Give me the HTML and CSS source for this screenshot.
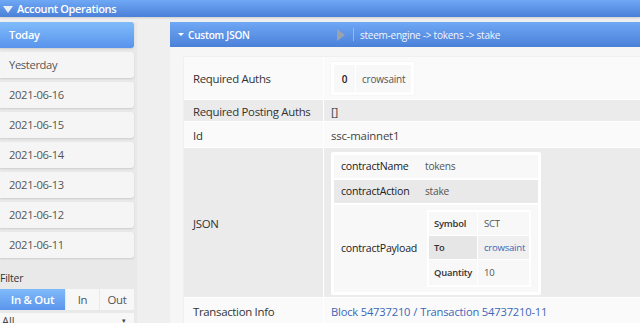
FILE: index.html
```html
<!DOCTYPE html>
<html>
<head>
<meta charset="utf-8">
<link rel="stylesheet" href="styles.css">
</head>
<body>
<div class="topbar"><span class="tri-down"></span><span class="topbar-title">Account Operations</span></div>
<div class="layout">
  <aside class="sidebar">
    <div class="day active">Today</div>
    <div class="day">Yesterday</div>
    <div class="day">2021-06-16</div>
    <div class="day">2021-06-15</div>
    <div class="day">2021-06-14</div>
    <div class="day">2021-06-13</div>
    <div class="day">2021-06-12</div>
    <div class="day">2021-06-11</div>
    <div class="filter">
      <div class="filter-label">Filter</div>
      <div class="seg">
        <div class="seg-btn active">In &amp; Out</div>
        <div class="seg-btn in">In</div>
        <div class="seg-btn out">Out</div>
      </div>
      <div class="select"><span>All</span><span class="caret">▾</span></div>
    </div>
  </aside>
  <main class="panel">
    <div class="panel-head">
      <div class="ph-left"><span class="tri-small"></span><span class="ph-title">Custom JSON</span></div>
      <div class="ph-right">
        <svg class="play" width="8" height="12" viewBox="0 0 8 12"><path d="M0 0 L8 6 L0 12 Z" fill="#9aa3ad"/></svg>
        <span class="sep"></span>
        <span class="ph-path">steem-engine -&gt; tokens -&gt; stake</span>
      </div>
    </div>
    <div class="panel-body">
      <div class="tbl">
        <div class="row r-auths">
          <div class="lab">Required Auths</div>
          <div class="val">
            <div class="authbox"><span class="ab-idx">0</span><span class="ab-name">crowsaint</span></div>
          </div>
        </div>
        <div class="row alt r-post">
          <div class="lab">Required Posting Auths</div>
          <div class="val">[]</div>
        </div>
        <div class="row r-id">
          <div class="lab">Id</div>
          <div class="val">ssc-mainnet1</div>
        </div>
        <div class="row alt r-json">
          <div class="lab">JSON</div>
          <div class="val">
            <div class="jt">
              <div class="jrow"><div class="jk">contractName</div><div class="jv">tokens</div></div>
              <div class="jrow jalt"><div class="jk">contractAction</div><div class="jv">stake</div></div>
              <div class="jrow jpay"><div class="jk">contractPayload</div>
                <div class="jv">
                  <div class="pt">
                    <div class="prow"><div class="pk">Symbol</div><div class="pv">SCT</div></div>
                    <div class="prow palt"><div class="pk">To</div><div class="pv"><a class="link">crowsaint</a></div></div>
                    <div class="prow"><div class="pk">Quantity</div><div class="pv">10</div></div>
                  </div>
                </div>
              </div>
            </div>
          </div>
        </div>
        <div class="row r-tx">
          <div class="lab">Transaction Info</div>
          <div class="val"><a class="link">Block 54737210</a> / <a class="link">Transaction 54737210-11</a></div>
        </div>
      </div>
    </div>
  </main>
</div>
</body>
</html>
```

FILE: styles.css
```css
* { box-sizing: border-box; }
html, body { margin: 0; padding: 0; }
body {
  width: 640px;
  height: 323px;
  overflow: hidden;
  background: #efefef;
  font-family: "Open Sans", "Noto Sans", sans-serif;
  color: #333;
}
.topbar {
  height: 17px;
  background: linear-gradient(#6fa8f5, #4b80d8);
  display: flex;
  align-items: center;
  padding-left: 3px;
  color: #fff;
  font-size: 11px;
  letter-spacing: -0.35px;
  font-weight: 600;
  box-shadow: 0 1px 2px rgba(0,0,0,0.15);
}
.tri-down {
  width: 0; height: 0;
  border-left: 5px solid transparent;
  border-right: 5px solid transparent;
  border-top: 7px solid #e8eef8;
  margin-right: 4px;
  margin-top: 1px;
}
.topbar-title { line-height: 17px; }
.layout {
  display: flex;
  padding-top: 5px;
}
.sidebar {
  width: 137px;
  flex: none;
  background: #e9e9e9;
  padding-right: 3px;
  display: flex;
  flex-direction: column;
  gap: 4px;
  height: 320px;
}
.day {
  height: 26px;
  background: #f5f5f5;
  border-radius: 0 3px 3px 0;
  box-shadow: 0 1px 2px rgba(0,0,0,0.12);
  font-size: 11.2px;
  letter-spacing: -0.35px;
  color: #555;
  padding-left: 9px;
  line-height: 26px;
}
.day.active {
  background: linear-gradient(#80bcfa, #5993ec);
  color: #fff;
  font-weight: 600;
  font-size: 11px;
  letter-spacing: -0.3px;
}
.filter {
  margin-top: 7px;
}
.filter-label {
  font-size: 10.4px;
  letter-spacing: -0.2px;
  color: #333;
  line-height: 14px;
  margin-bottom: 4px;
  padding-top: 2px;
}
.seg {
  display: flex;
  height: 21px;
  gap: 1px;
}
.seg-btn {
  background: #f7f7f7;
  font-size: 11.4px;
  letter-spacing: -0.3px;
  color: #555;
  display: flex;
  align-items: center;
  justify-content: center;
}
.seg-btn.active {
  width: 65px;
  background: linear-gradient(#7fbbfa, #5b95ec);
  color: #fff;
  font-weight: 600;
}
.seg-btn.in { width: 33px; }
.seg-btn.out { width: 34px; }
.select {
  margin-top: 3px;
  height: 16px;
  background: #f7f7f7;
  display: flex;
  justify-content: space-between;
  padding: 0 8px 0 2px;
  font-size: 11px;
  color: #444;
  line-height: 16px;
}
.caret { font-size: 7px; }
.panel {
  margin-left: 33px;
  flex: 1;
  min-width: 0;
  background: #f6f6f6;
  height: 320px;
}
.panel-head {
  height: 25px;
  background: linear-gradient(#6fa8f5, #4b80d8);
  display: flex;
  align-items: center;
  color: #fff;
}
.ph-left {
  width: 167px;
  display: flex;
  align-items: center;
  padding-left: 8px;
}
.tri-small {
  width: 0; height: 0;
  border-left: 3px solid transparent;
  border-right: 3px solid transparent;
  border-top: 3px solid #fff;
  margin-right: 4px;
}
.ph-title { font-size: 10px; letter-spacing: -0.2px; font-weight: 600; }
.ph-right {
  display: flex;
  align-items: center;
}
.play { display: block; }
.sep {
  width: 1px;
  height: 13px;
  background: #9fb6da;
  margin: 0 6px 0 8px;
}
.ph-path { font-size: 10px; letter-spacing: -0.25px; color: #f2f6fc; }
.panel-body {
  padding: 10px 0 0 14px;
}
.tbl {
  width: 470px;
  background: #fff;
  box-shadow: 0 0 2px rgba(0,0,0,0.08);
}
.row {
  display: flex;
  border-bottom: 1px solid #fff;
  background: #fafafa;
}
.row.alt { background: #ebebeb; }
.lab {
  width: 140px;
  flex: none;
  border-right: 1px solid #fff;
  padding-left: 9px;
  padding-top: 1px;
  font-size: 11.4px;
  letter-spacing: -0.3px;
  color: #333;
  display: flex;
  align-items: center;
}
.val {
  flex: 1;
  font-size: 11.4px;
  letter-spacing: -0.2px;
  color: #444;
  padding-left: 7px;
  padding-top: 1px;
  display: flex;
  align-items: center;
}
.r-auths { height: 43px; }
.r-post { height: 22px; }
.r-id { height: 26px; }
.r-json { height: 150px; }
.r-tx { height: 26px; }
.authbox {
  display: flex;
  background: #fff;
  padding: 3px;
  height: 33px;
  box-shadow: 0 0 1px rgba(0,0,0,0.1);
}
.ab-idx, .ab-name {
  background: #f8f8f8;
  display: flex;
  align-items: center;
  font-size: 10px;
  letter-spacing: -0.2px;
}
.ab-idx { width: 21px; justify-content: center; color: #222; font-weight: 600; margin-right: 1px; }
.ab-name { padding: 0 6px; color: #555; }
.jt {
  background: #fff;
  width: 210px;
  padding: 3px;
  border-radius: 2px;
}
.jrow {
  display: flex;
  background: #f8f8f8;
  margin-bottom: 2px;
}
.jrow:last-child { margin-bottom: 0; }
.jrow.jalt { background: #e9e9e9; }
.jk {
  width: 86px;
  flex: none;
  font-size: 10.6px;
  letter-spacing: -0.25px;
  color: #222;
  padding-left: 7px;
  display: flex;
  align-items: center;
}
.jv {
  flex: 1;
  font-size: 10.2px;
  letter-spacing: -0.25px;
  color: #555;
  padding-left: 5px;
  display: flex;
  align-items: center;
}
.jrow:not(.jpay) { height: 23px; }
.jpay { height: 87px; }
.jpay .jv { padding-left: 7px; }
.pt {
  background: #fff;
  width: 104px;
  padding: 2px;
}
.prow {
  display: flex;
  height: 23px;
  margin-bottom: 1px;
  background: #f8f8f8;
}
.prow:last-child { margin-bottom: 0; height: 25px; }
.pk {
  width: 49px;
  flex: none;
  font-size: 9.4px;
  letter-spacing: -0.2px;
  font-weight: 600;
  color: #333;
  padding-left: 5px;
  display: flex;
  align-items: center;
  border-right: 1px solid #fff;
}
.pv {
  flex: 1;
  font-size: 9.6px;
  letter-spacing: -0.25px;
  color: #555;
  padding-left: 6px;
  display: flex;
  align-items: center;
}
.palt .pk { background: #e6e6e6; }
.palt .pv { background: #f0f0f0; }
.link { color: #3a67b8; text-decoration: none; }
.r-tx .val { font-size: 11.2px; letter-spacing: -0.2px; color: #3a67b8; }
.r-tx .val .link { margin: 0 3px; }
.r-tx .val .link:first-child { margin-left: 0; }
```
